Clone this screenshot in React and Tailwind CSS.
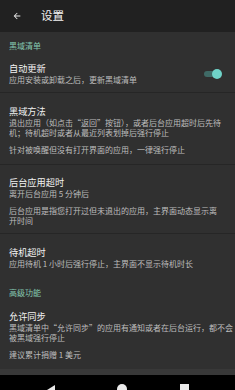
import React from 'react'

const font = { fontFamily: '"Noto Sans CJK SC", "Noto Sans", sans-serif' }

function Header({ children, className = '' }) {
  return (
    <div className={`px-[9px] text-[8px] leading-[10px] text-[#86c9b0] ${className}`}>{children}</div>
  )
}

function Divider() {
  return <div className="h-px bg-[#262626]" />
}

function Item({ title, lines, extra, pt = 'pt-[12px]', pb = 'pb-[8px]', right }) {
  return (
    <div className={`flex items-center px-[9px] ${pt} ${pb}`}>
      <div className="flex-1 min-w-0">
        <div className="text-[9.2px] leading-[12px] text-[#f2f2f2]">{title}</div>
        <div className="mt-px text-[8px] leading-[10px] text-[#bdbdbd] whitespace-nowrap">
          {lines.map((l, i) => (
            <div key={i}>{l}</div>
          ))}
        </div>
        {extra && (
          <div className="mt-[7px] text-[8px] leading-[10px] text-[#bdbdbd] whitespace-nowrap">
            {extra.map((l, i) => (
              <div key={i}>{l}</div>
            ))}
          </div>
        )}
      </div>
      {right}
    </div>
  )
}

function Toggle() {
  return (
    <div className="relative w-[18px] h-[10px] mr-[4px] shrink-0">
      <div className="absolute left-0 top-[2px] w-[16px] h-[6px] rounded-full bg-[#3f6a66]" />
      <div className="absolute right-0 top-0 w-[10px] h-[10px] rounded-full bg-[#6fd3c8]" />
    </div>
  )
}

export default function App() {
  return (
    <div className="w-[235px] h-[390px] overflow-hidden flex flex-col bg-[#303030]" style={font}>
      <div className="h-[32px] shrink-0 bg-[#212121] flex items-center">
        <svg width="10" height="10" viewBox="0 0 24 24" className="ml-[12px]">
          <path d="M20 11H7.83l5.59-5.59L12 4l-8 8 8 8 1.41-1.41L7.83 13H20v-2z" fill="#ececec" />
        </svg>
        <div className="ml-[19px] text-[11.5px] text-[#f5f5f5]">设置</div>
      </div>

      <div className="flex-1 flex flex-col">
        <Header className="pt-[9px]">黑域清单</Header>
        <Item
          pt="pt-[11px]"
          pb="pb-[7px]"
          title="自动更新"
          lines={['应用安装或卸载之后，更新黑域清单']}
          right={<Toggle />}
        />
        <Divider />
        <Item
          title="黑域方法"
          lines={['退出应用（如点击“返回”按钮），或者后台应用超时后先待', '机；待机超时或者从最近列表划掉后强行停止']}
          extra={['针对被唤醒但没有打开界面的应用，一律强行停止']}
          pb="pb-[9px]"
        />
        <Divider />
        <Item
          pt="pt-[11px]"
          title="后台应用超时"
          lines={['离开后台应用 5 分钟后']}
          extra={['后台应用是指您打开过但未退出的应用，主界面动态显示离', '开时间']}
          pb="pb-[7px]"
        />
        <Divider />
        <Item title="待机超时" lines={['应用待机 1 小时后强行停止，主界面不显示待机时长']} />
        <Header className="pt-[11px]">高级功能</Header>
        <Item
          title="允许同步"
          lines={['黑域清单中“允许同步”的应用有通知或者在后台运行，都不会', '被黑域强行停止']}
          extra={['建议累计捐赠 1 美元']}
        />
      </div>

      <div className="h-[6px] shrink-0 bg-[#383838]" />
      <div className="h-[15px] shrink-0 bg-black flex justify-between items-start pt-[9px] px-[46px]">
        <svg width="10" height="12" viewBox="0 0 10 12">
          <path d="M9 1 L1 6 L9 11 Z" fill="#eaeaea" />
        </svg>
        <div className="w-[10px] h-[10px] rounded-full bg-[#eaeaea] ml-[8px]" />
        <div className="w-[9px] h-[9px] bg-[#eaeaea]" />
      </div>
    </div>
  )
}
